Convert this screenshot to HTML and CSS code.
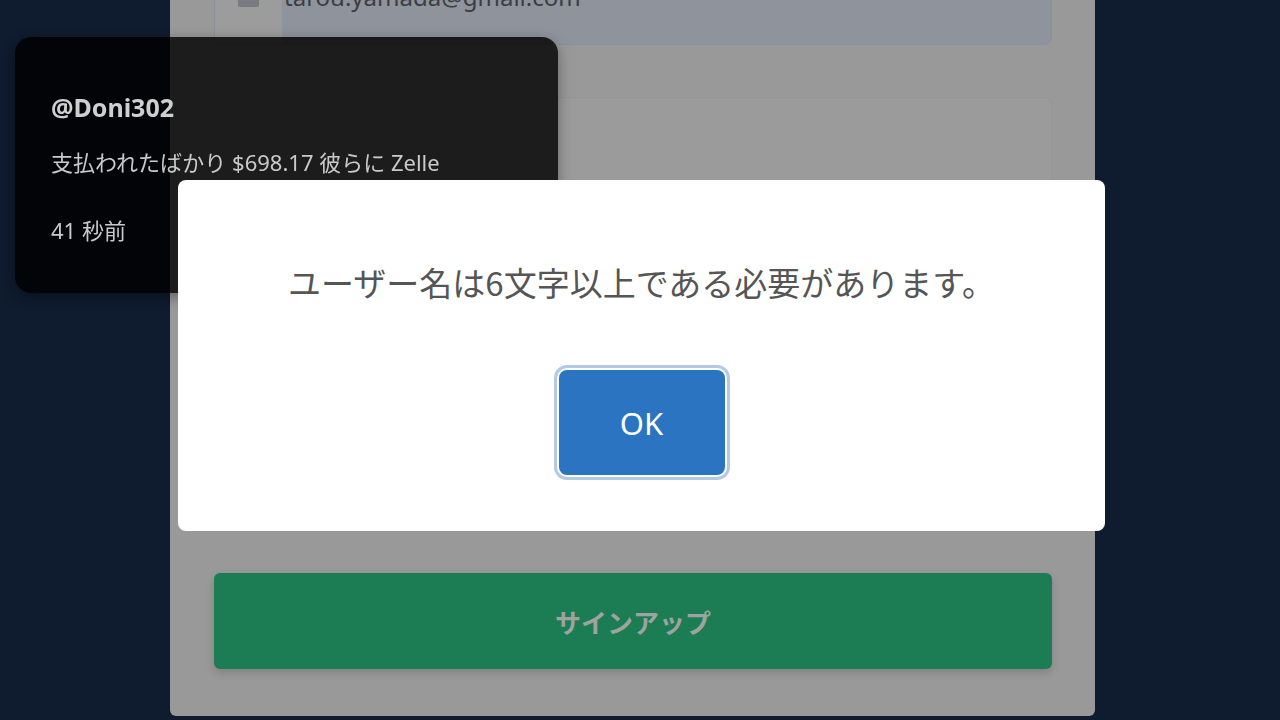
FILE: index.html
```html
<!DOCTYPE html>
<html lang="ja">
<head>
    <meta charset="UTF-8">
    <meta name="viewport" content="width=device-width, initial-scale=1.0">
    <title>サインアップ</title>
    <link rel="stylesheet" href="styles.css">
</head>
<body>
    <div class="card">
        <div class="field filled">
            <span class="field-icon"><span class="icon-box"></span></span>
            <span class="field-value">tarou.yamada@gmail.com</span>
        </div>
        <div class="field"></div>
        <div class="field"></div>
        <div class="field"></div>
        <button class="signup" disabled>サインアップ</button>
    </div>

    <!-- 通知トースト -->
    <div class="toast">
        <p class="toast-user">@Doni302</p>
        <p class="toast-msg">支払われたばかり $698.17 彼らに Zelle</p>
        <p class="toast-time">41 秒前</p>
    </div>

    <!-- エラーダイアログ -->
    <div class="dialog">
        <p class="dialog-msg">ユーザー名は6文字以上である必要があります。</p>
        <button class="dialog-ok">OK</button>
    </div>
</body>
</html>
```

FILE: styles.css
```css
html, body {
    height: 100%;
}
body {
    margin: 0;
    overflow: hidden;
    background-color: #0f1b2e;
    font-family: "Noto Sans", "Noto Sans CJK JP", sans-serif;
}
.card {
    width: 925px;
    margin: -50px 0 0 170px;
    padding: 0 43px 47px 44px;
    box-sizing: border-box;
    background-color: #999999;
    border-radius: 0 0 6px 6px;
    display: flex;
    flex-direction: column;
    gap: 52px;
}
.field {
    height: 95px;
    border: 1px solid #959595;
    border-radius: 8px;
    background-color: #9b9b9b;
    box-sizing: border-box;
    display: flex;
    align-items: center;
    overflow: hidden;
}
.field.filled {
    background-color: #8f939c;
    border-color: #8c9099;
}
.field-icon {
    width: 67px;
    height: 100%;
    background-color: #9c9c9c;
    display: flex;
    align-items: center;
    justify-content: center;
}
.icon-box {
    width: 21px;
    height: 16px;
    margin-top: 2px;
    background-color: #777a80;
    border-radius: 2px;
}
.field-value {
    padding-left: 2px;
    margin-top: -2px;
    font-size: 24px;
    color: #3b3d42;
}
.signup {
    margin-top: 35px;
    height: 96px;
    border: none;
    border-radius: 6px;
    background-color: #1c7c54;
    color: #9fa39f;
    font-family: "Noto Sans CJK JP", sans-serif;
    font-size: 26px;
    font-weight: bold;
    box-shadow: 0 4px 8px rgba(0,0,0,0.15);
}
.toast {
    position: fixed;
    top: 37px;
    left: 15px;
    width: 543px;
    height: 256px;
    box-sizing: border-box;
    padding: 52px 36px 0;
    border-radius: 16px;
    background-color: rgba(0,0,0,0.82);
    box-shadow: 0 4px 14px rgba(0,0,0,0.35);
    color: #c9c9c9;
}
.toast p {
    margin: 0;
}
.toast-user {
    font-size: 25px;
    font-weight: bold;
    line-height: 36px;
    color: #cfcfcf;
}
.toast-msg {
    margin-top: 22px !important;
    font-size: 22px;
    line-height: 30px;
}
.toast-time {
    margin-top: 38px !important;
    font-size: 22px;
    line-height: 30px;
}
.dialog {
    position: fixed;
    top: 180px;
    left: 178px;
    width: 927px;
    height: 351px;
    box-sizing: border-box;
    padding-top: 76px;
    background-color: #ffffff;
    border-radius: 8px;
    display: flex;
    flex-direction: column;
    align-items: center;
}
.dialog-msg {
    margin: 0;
    font-family: "Noto Sans CJK JP", sans-serif;
    font-size: 33px;
    line-height: 52px;
    color: #555555;
}
.dialog-ok {
    margin-top: 62px;
    width: 166px;
    height: 105px;
    border: none;
    border-radius: 8px;
    background-color: #2b74c1;
    color: #ffffff;
    font-family: "Noto Sans", sans-serif;
    font-size: 31px;
    box-shadow: 0 0 0 2px #ffffff, 0 0 0 5px #b3c9e4;
    cursor: pointer;
}
```
